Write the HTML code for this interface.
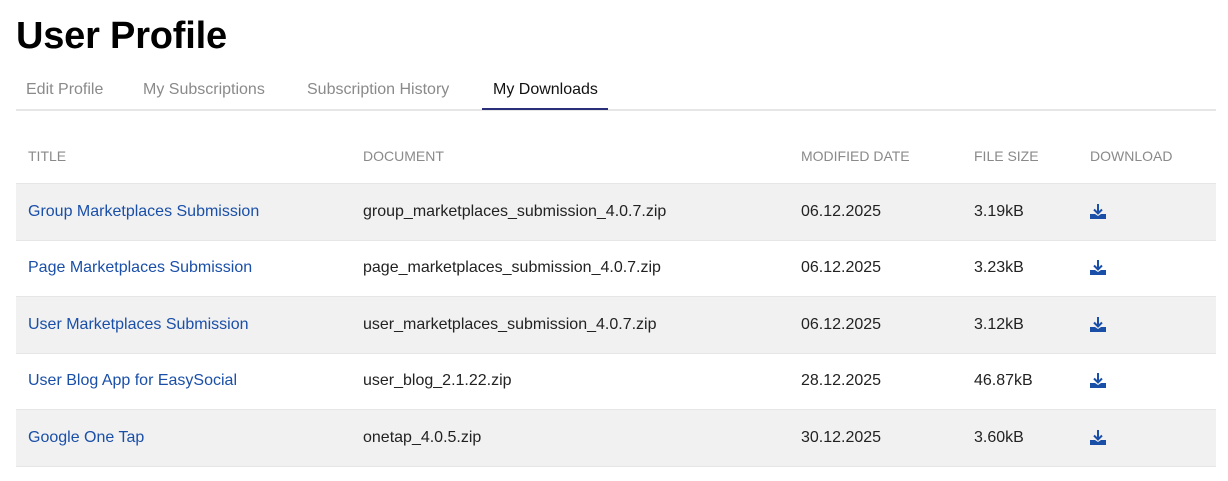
<!DOCTYPE html>
<html><head><style>
body{margin:0;background:#fff;font-family:"Liberation Sans",Arial,sans-serif;}
h1{position:absolute;left:16px;top:12px;margin:0;font-size:38px;font-weight:bold;letter-spacing:-0.2px;color:#000;line-height:48px}
.tabs{position:absolute;left:16px;top:72px;width:1200px;height:37px;border-bottom:2px solid #e6e6e6}
.tab{position:absolute;top:9px;font-size:16px;color:#8a8a8a}
.tab.a{color:#111}
.ul{position:absolute;left:466px;top:36px;width:126px;height:2px;background:#2a2f7a}
table{position:absolute;left:16px;top:128px;width:1200px;border-collapse:collapse;font-size:16px}
td,th{padding:0 0 0 12px;text-align:left;height:55.5px;border-bottom:1px solid #e6e6e6}
th{font-weight:normal;color:#8a8a8a;font-size:14px;height:54px;padding-top:1px}
tbody tr:nth-child(odd){background:#f1f1f1}
a{color:#1a4fa8;text-decoration:none}
td{color:#222}
svg{display:block;margin-left:-1px}
</style></head><body>
<h1>User Profile</h1>
<div class="tabs">
<span class="tab" style="left:10px">Edit Profile</span>
<span class="tab" style="left:127px">My Subscriptions</span>
<span class="tab" style="left:291px">Subscription History</span>
<span class="tab a" style="left:477px">My Downloads</span>
<div class="ul"></div>
</div>
<table>
<thead><tr><th style="width:323px">TITLE</th><th style="width:426px">DOCUMENT</th><th style="width:161px">MODIFIED DATE</th><th style="width:104px">FILE SIZE</th><th>DOWNLOAD</th></tr></thead>
<tbody>
<tr><td><a>Group Marketplaces Submission</a></td><td>group_marketplaces_submission_4.0.7.zip</td><td>06.12.2025</td><td>3.19kB</td><td><svg width="18" height="16" viewBox="0 0 18 16"><path d="M9 0v9M5 5.5l4 4 4-4" stroke="#1a4fa8" stroke-width="2" fill="none"/><path d="M1 10h5l3 2 3-2h5v5H1z" fill="#1a4fa8"/></svg></td></tr>
<tr><td><a>Page Marketplaces Submission</a></td><td>page_marketplaces_submission_4.0.7.zip</td><td>06.12.2025</td><td>3.23kB</td><td><svg width="18" height="16" viewBox="0 0 18 16"><path d="M9 0v9M5 5.5l4 4 4-4" stroke="#1a4fa8" stroke-width="2" fill="none"/><path d="M1 10h5l3 2 3-2h5v5H1z" fill="#1a4fa8"/></svg></td></tr>
<tr><td><a>User Marketplaces Submission</a></td><td>user_marketplaces_submission_4.0.7.zip</td><td>06.12.2025</td><td>3.12kB</td><td><svg width="18" height="16" viewBox="0 0 18 16"><path d="M9 0v9M5 5.5l4 4 4-4" stroke="#1a4fa8" stroke-width="2" fill="none"/><path d="M1 10h5l3 2 3-2h5v5H1z" fill="#1a4fa8"/></svg></td></tr>
<tr><td><a>User Blog App for EasySocial</a></td><td>user_blog_2.1.22.zip</td><td>28.12.2025</td><td>46.87kB</td><td><svg width="18" height="16" viewBox="0 0 18 16"><path d="M9 0v9M5 5.5l4 4 4-4" stroke="#1a4fa8" stroke-width="2" fill="none"/><path d="M1 10h5l3 2 3-2h5v5H1z" fill="#1a4fa8"/></svg></td></tr>
<tr><td><a>Google One Tap</a></td><td>onetap_4.0.5.zip</td><td>30.12.2025</td><td>3.60kB</td><td><svg width="18" height="16" viewBox="0 0 18 16"><path d="M9 0v9M5 5.5l4 4 4-4" stroke="#1a4fa8" stroke-width="2" fill="none"/><path d="M1 10h5l3 2 3-2h5v5H1z" fill="#1a4fa8"/></svg></td></tr>
</tbody></table>
</body></html>
